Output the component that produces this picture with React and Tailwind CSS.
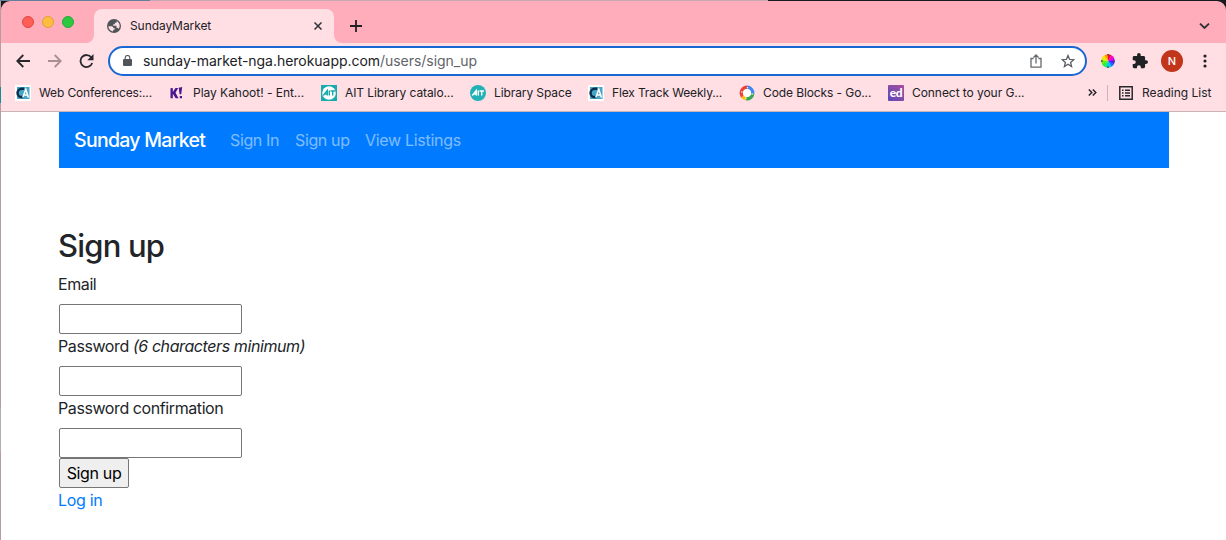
import React from "react";

function Globe() {
  return (
    <svg className="block h-[14px] w-[14px] shrink-0" viewBox="0 0 24 24" fill="#50555a">
      <path d="M12 0a12 12 0 1 0 0 24 12 12 0 0 0 0-24zM10 21.300C5.800 20.500 2.700 17 2.400 12.300L8 12.500c2 .3 3 1.500 3 3.300h2.700c-.2 2-1.200 2.500-2.700 2.700zM20 17c-.8-1.500-2-2-3.800-2v-3.300h-5.500V9.200h2.700V6.500h3V3.600c3.200 1.500 5.300 4.700 5.300 8.400 0 1.900-.6 3.600-1.700 5z" />
    </svg>
  );
}

function CaIcon() {
  return (
    <svg className="block h-4 w-4 shrink-0" viewBox="0 0 16 16">
      <path fill="#fff" d="M0 0h16v16H0z" />
      <path fill="#45a6c6" d="M2 2h12.500v12H2z" />
      <path d="M9.200 3.800H6.700a4.100 4.100 0 0 0 0 8.300h2" fill="none" stroke="#0c2f50" strokeWidth="2.500" />
      <path d="M7.800 12.500 10.800 4.300l2.600 8.200M9.200 10h3.400" fill="none" stroke="#fff" strokeWidth="1.500" />
    </svg>
  );
}

function KIcon() {
  return (
    <svg className="block h-4 w-4 shrink-0" viewBox="0 0 16 16" fill="#46178f">
      <path d="m1.500 3.200 2.300-.2v4L6.500 3h2.700L6.500 7.700l3 5.500H6.700L3.800 8.800v4.400H1.500zM9.700 2.800l3.500-.8-1 7.300h-1.600zM10.800 11h2.200v2.200h-2.200z" />
    </svg>
  );
}

function AitIcon({ round }) {
  return (
    <svg className="block h-4 w-4 shrink-0" viewBox="0 0 16 16">
      {round ? <circle cx="8" cy="8" r="8" fill="#20b2b4" /> : <path fill="#19aaad" d="M0 0h16v16H0z" />}
      {!round && <circle cx="8" cy="8" r="6.800" fill="#fff" />}
      <path
        d="m2.300 10.500 4-5v5M4 9h2.300M8.300 5.500v5M9.500 6h4.500M11.700 6v4.500"
        fill="none"
        stroke={round ? "#fff" : "#19aaad"}
        strokeWidth="1.400"
      />
    </svg>
  );
}

function RingIcon() {
  return (
    <svg className="block h-4 w-4 shrink-0" viewBox="0 0 16 16" fill="none" strokeWidth="3.600">
      <path d="M2.300 8A5.600 5.600 0 0 1 8 2.400" stroke="#ea4335" />
      <path d="M8 2.400A5.600 5.600 0 0 1 13.600 8.500" stroke="#4285f4" />
      <path d="M13.600 8.500A5.600 5.600 0 0 1 7 13.500" stroke="#34a853" />
      <path d="M7 13.500A5.600 5.600 0 0 1 3.500 11.400" stroke="#fbbc05" />
      <path d="M3.500 11.400A5.600 5.600 0 0 1 2.400 8" stroke="#ea4335" />
      <circle cx="8" cy="8" r="4.100" fill="#fff" />
      <circle cx="2.900" cy="7" r=".7" fill="#fff" />
      <circle cx="8.500" cy="2.800" r=".7" fill="#fff" />
      <circle cx="13.100" cy="9" r=".7" fill="#fff" />
      <circle cx="7" cy="13.200" r=".7" fill="#fff" />
    </svg>
  );
}

function EdIcon() {
  return (
    <span className="flex h-4 w-4 shrink-0 items-center justify-center rounded-[1px] bg-linear-to-tr from-[#5b46ba] to-[#a94b9b] font-[Lato] text-[12px] leading-none font-black tracking-[-0.3px] text-white">
      ed
    </span>
  );
}

function Bookmark({ icon, label, className, text }) {
  return (
    <div className={"flex shrink-0 items-center gap-2 " + className}>
      {icon}
      <span className={"whitespace-nowrap " + text}>{label}</span>
    </div>
  );
}

const WHEEL = ["#ff0040", "#ff00b0", "#c000ff", "#4020ff", "#1570ff", "#00c8f0", "#00e8a0", "#20f030", "#60f010", "#c0f010", "#ffe000", "#ff9000"];
const WHEEL_TICKS = [0, 90, 180, 270];

function ColorWheel() {
  return (
    <svg className="block h-[14px] w-[14px]" viewBox="-7 -7 14 14">
      {WHEEL.map((c, i) => (
        <path key={c} fill={c} d="M0 0-1.800-6.500A6.800 6.800 0 0 1 1.800-6.500Z" transform={`rotate(${i * 30 + 15})`} />
      ))}
      {WHEEL_TICKS.map((a) => (
        <path key={a} fill="#5a4a40" d="M-.7-7H.7v1.800H-.7z" transform={`rotate(${a})`} />
      ))}
    </svg>
  );
}

function TabStrip() {
  return (
    <div className="flex h-[42px] items-end rounded-t-[9px] bg-[#ffadbb]">
      <div className="flex h-[42px] w-[93px] items-start gap-2 pt-[15px] pl-[21px]">
        <span className="h-3 w-3 rounded-full border border-[#e1443e] bg-[#ff5f57]" />
        <span className="h-3 w-3 rounded-full border border-[#dfa036] bg-[#febc40]" />
        <span className="h-3 w-3 rounded-full border border-[#24a938] bg-[#2bc840]" />
      </div>
      <div className="relative flex h-[34px] w-[240px] items-center rounded-t-lg bg-[#ffdee4] pl-[13px]">
        <svg className="absolute bottom-0 -left-2 h-2 w-2" viewBox="0 0 8 8" fill="#ffdee4">
          <path d="M8 0v8H0a8 8 0 0 0 8-8z" />
        </svg>
        <svg className="absolute -right-2 bottom-0 h-2 w-2" viewBox="0 0 8 8" fill="#ffdee4">
          <path d="M0 0v8h8a8 8 0 0 1-8-8z" />
        </svg>
        <Globe />
        <span className="ml-[9px] w-[184px] text-[12px] tracking-[-0.08px]">SundayMarket</span>
        <svg className="block h-2 w-2" viewBox="0 0 8 8" stroke="#303135" strokeWidth="1.500">
          <path d="m.5.500 7 7m0-7-7 7" />
        </svg>
      </div>
      <svg className="mb-[11px] ml-4 block h-3 w-3" viewBox="0 0 12 12" stroke="#202124" strokeWidth="1.800">
        <path d="M6 0v12M0 6h12" />
      </svg>
      <svg className="mr-4 mb-[14px] ml-auto block h-[6px] w-[11px]" viewBox="0 0 11 6" fill="none" stroke="#303034" strokeWidth="1.800">
        <path d="m1 .600 4.500 4.400L10 .600" />
      </svg>
    </div>
  );
}

function Toolbar() {
  return (
    <div className="flex h-[36px] items-center bg-[#ffdee4] pl-[15px]">
      <svg className="block h-[14px] w-[14px]" viewBox="0 0 14 14" fill="none" stroke="#27282c" strokeWidth="1.800">
        <path d="M14 7H1.500M7.300 1 1.300 7l6 6" />
      </svg>
      <svg className="ml-[18px] block h-[14px] w-[14px]" viewBox="0 0 14 14" fill="none" stroke="#a78f94" strokeWidth="1.800">
        <path d="M0 7h12.500M6.700 1l6 6-6 6" />
      </svg>
      <svg className="ml-[17px] block h-[15px] w-[15px]" viewBox="0 0 15 15" fill="none" stroke="#27282c" strokeWidth="1.800">
        <path d="M12.400 3.500A6 6 0 1 0 13.200 9" />
        <path d="M14.500 0v6.200H8.300z" fill="#27282c" stroke="none" />
      </svg>
      <div className="ml-[14px] flex h-[30px] w-[979px] items-center rounded-full border-2 border-[#1967d2] bg-white pl-[13px]">
        <svg className="block h-[12px] w-[9px]" viewBox="0 0 9 12" fill="#50555a">
          <path d="M1 4h7a1 1 0 0 1 1 1v5a1 1 0 0 1-1 1H1a1 1 0 0 1-1-1V5a1 1 0 0 1 1-1z" />
          <path d="M2.200 4.500V2.800a2.300 2.300 0 0 1 4.600 0v1.700" fill="none" stroke="#50555a" strokeWidth="1.100" />
        </svg>
        <span className="-mt-px ml-[11px] text-[14px] tracking-[-0.035px] whitespace-nowrap text-[#202124]">
          sunday-market-nga.herokuapp.com<span className="text-[#5f6368]">/users/sign_up</span>
        </span>
        <svg className="mr-[19px] ml-auto block h-[14px] w-[12px]" viewBox="0 0 12 14" fill="none" stroke="#66696d" strokeWidth="1.300">
          <path d="M3.500 4.500H1v8.700h10V4.500H8.500M6 9.500V1.200M3.500 3.500 6 1l2.500 2.500" />
        </svg>
        <svg className="mr-[10px] block h-[14px] w-[14px]" viewBox="0 0 14 14" fill="none" stroke="#5a5d61" strokeWidth="1.300">
          <path d="m7 1.500 1.600 3.900 4.200.3-3.200 2.700 1 4.100L7 10.300l-3.600 2.200 1-4.100-3.200-2.700 4.200-.3z" />
        </svg>
      </div>
      <div className="ml-[14px]">
        <ColorWheel />
      </div>
      <svg className="ml-[17px] block h-[16px] w-[16px]" viewBox="1 1 22 22" fill="#202124">
        <path d="M20.500 11H19V7c0-1.100-.9-2-2-2h-4V3.500a2.500 2.500 0 0 0-5 0V5H4c-1.100 0-2 .9-2 2v3.800h1.500a2.700 2.700 0 0 1 0 5.400H2V20c0 1.100.9 2 2 2h3.800v-1.500a2.700 2.700 0 0 1 5.400 0V22H17c1.100 0 2-.9 2-2v-4h1.500a2.500 2.500 0 0 0 0-5z" />
      </svg>
      <span className="ml-[13px] flex h-[22px] w-[22px] items-center justify-center rounded-full bg-[#c1351a] text-[11px] font-medium text-white">N</span>
      <svg className="ml-5 block h-[14px] w-[4px]" viewBox="0 0 4 14" fill="#202124">
        <circle cx="2" cy="2" r="1.600" />
        <circle cx="2" cy="7" r="1.600" />
        <circle cx="2" cy="12" r="1.600" />
      </svg>
    </div>
  );
}

function BookmarksBar() {
  return (
    <div className="flex h-[33px] items-center border-b border-[#cbb3b9] bg-[#ffdee4] pb-[5px] pl-[14px] text-[12px] text-[#202124]">
      <Bookmark icon={<CaIcon />} label="Web Conferences:..." className="w-[154px]" text="tracking-[-0.13px]" />
      <Bookmark icon={<KIcon />} label="Play Kahoot! - Ent..." className="w-[152px]" text="tracking-[-0.03px]" />
      <Bookmark icon={<AitIcon />} label="AIT Library catalo..." className="w-[149px]" text="tracking-[-0.1px]" />
      <Bookmark icon={<AitIcon round />} label="Library Space" className="w-[118px]" text="tracking-[-0.1px]" />
      <Bookmark icon={<CaIcon />} label="Flex Track Weekly..." className="w-[151px]" text="tracking-[-0.15px]" />
      <Bookmark icon={<RingIcon />} label="Code Blocks - Go..." className="w-[149px]" text="tracking-[-0.1px]" />
      <Bookmark icon={<EdIcon />} label="Connect to your G..." className="w-[200px]" text="tracking-[-0.06px]" />
      <svg className="block h-[7px] w-[9px]" viewBox="0 0 9 7" fill="none" stroke="#27282c" strokeWidth="1.500">
        <path d="m.8.500 3 3-3 3m4-6 3 3-3 3" />
      </svg>
      <span className="ml-[10px] h-4 w-px bg-[#cbb3b9]" />
      <svg className="ml-[11px] block h-[14px] w-[14px]" viewBox="0 0 14 14" fill="none" stroke="#27282c" strokeWidth="1.500">
        <path d="M.8.800h12.400v12.400H.8zM3 4.200h1.500M6 4.200h5M3 7h1.500M6 7h5M3 9.800h1.500M6 9.800h5" />
      </svg>
      <span className="ml-[9px] whitespace-nowrap">Reading List</span>
    </div>
  );
}

function Field({ label, hint }) {
  return (
    <div className="flex h-[62px] flex-col">
      <label className="mb-2 -ml-px h-6 leading-6 tracking-[-0.41px]">
        {label} {hint && <em>{hint}</em>}
      </label>
      <input className="h-[30px] w-[183px] rounded-[2px] border border-[#767676] bg-white" />
    </div>
  );
}

export default function App() {
  return (
    <div className="h-[540px] w-[1226px] overflow-hidden bg-[#18191c] font-[Inter,sans-serif] text-[#202124]">
      <div className="flex h-px">
        <span className="w-[150px] bg-[#65809c]" />
        <span className="w-[618px] bg-[#c9a7b0]" />
      </div>
      <div className="flex h-[539px]">
        <div className="flex w-px shrink-0 flex-col bg-[#b99ca3]">
          <span className="mt-[86px] h-4 bg-[#168c8e]" />
          <span className="mt-[305px] h-[44px] bg-[#b0b0b0]" />
        </div>
        <div className="w-[1225px]">
          <TabStrip />
          <Toolbar />
          <BookmarksBar />
          <div className="h-[428px] bg-white pr-[57px] pl-[58px] text-[16px] text-[#212529]">
            <nav className="flex h-14 items-center bg-[#007bff] pl-[15px] whitespace-nowrap text-white">
              <span className="w-[156px] pt-[2px] text-[19.5px] font-[450] tracking-[-0.72px]">Sunday Market</span>
              <span className="w-[65px] tracking-[-0.36px] text-white/50">Sign In</span>
              <span className="w-[70px] tracking-[-0.36px] text-white/50">Sign up</span>
              <span className="tracking-[-0.3px] text-white/50">View Listings</span>
            </nav>
            <h2 className="mt-[59px] mb-2 -ml-px h-[38px] text-[31px] leading-[38px] font-[530] tracking-[-0.8px]">Sign up</h2>
            <form className="-mt-px">
              <Field label="Email" />
              <Field label="Password" hint="(6 characters minimum)" />
              <Field label="Password confirmation" />
              <button type="button" className="block h-[30px] w-[70px] rounded-[2px] border border-[#767676] bg-[#efefef] tracking-[-0.36px] text-black">
                Sign up
              </button>
            </form>
            <a className="-ml-px block leading-6 tracking-[-0.3px] text-[#007bff]">Log in</a>
          </div>
        </div>
      </div>
    </div>
  );
}
